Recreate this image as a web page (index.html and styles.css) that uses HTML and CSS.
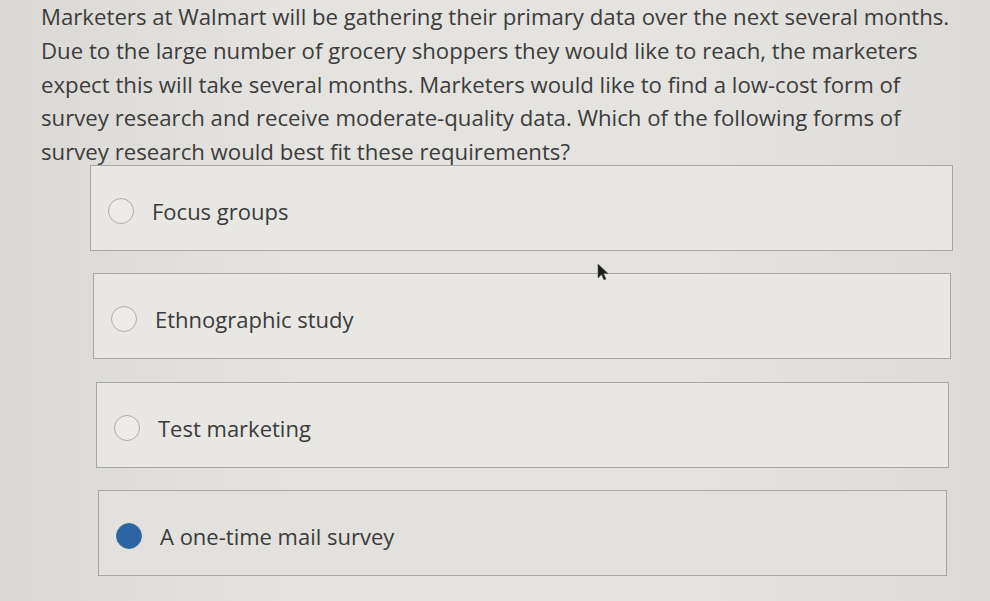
FILE: index.html
```html
<!DOCTYPE html>
<html>
<head>
<meta charset="utf-8">
<link rel="stylesheet" href="styles.css">
</head>
<body>
<div class="page">
  <p class="question">Marketers at Walmart will be gathering their primary data over the next several months.<br>Due to the large number of grocery shoppers they would like to reach, the marketers<br>expect this will take several months. Marketers would like to find a low-cost form of<br>survey research and receive moderate-quality data. Which of the following forms of<br>survey research would best fit these requirements?</p>
  <div class="options">
    <label class="option o1"><span class="radio"></span><span class="label">Focus groups</span></label>
    <label class="option o2"><span class="radio"></span><span class="label">Ethnographic study</span></label>
    <label class="option o3"><span class="radio"></span><span class="label">Test marketing</span></label>
    <label class="option o4"><span class="radio checked"></span><span class="label">A one-time mail survey</span></label>
  </div>
  <svg class="cursor" width="12" height="18" viewBox="0 0 12 18"><path d="M1 1 L1 15 L4.5 11.5 L7 17 L9 16 L6.5 10.5 L11 10.5 Z" fill="#1e1e1e" stroke="#555" stroke-width="0.6"/></svg>
</div>
</body>
</html>
```
FILE: styles.css
```css
html, body {
  margin: 0;
  padding: 0;
}
body {
  width: 990px;
  height: 601px;
  overflow: hidden;
  background: linear-gradient(90deg, #dbd9d5 0%, #e4e3df 30%, #e4e3df 70%, #dcdbd7 100%);
  font-family: "Open Sans", "Liberation Sans", sans-serif;
  color: #3e3e3e;
}
.page {
  position: relative;
  padding: 0 0 0 41px;
}
.question {
  margin: 0;
  white-space: nowrap;
  font-size: 22.2px;
  font-weight: 500;
  line-height: 33.8px;
  color: #3c3c3c;
}
.options {
  display: flex;
  flex-direction: column;
  gap: 22.5px;
  margin-top: -4px;
  margin-left: 49px;
  width: 863px;
}
.option {
  display: flex;
  align-items: center;
  height: 86px;
  box-sizing: border-box;
  border: 1.5px solid #a7a7a5;
  background: #e8e7e3;
  padding-left: 17px;
  padding-top: 6px;
}
.o2 { margin-left: 3px; margin-right: 2px; }
.o3 { margin-left: 6px; margin-right: 4px; }
.o4 { margin-left: 8px; margin-right: 6px; background: #e2e1dd; }
.radio {
  width: 26px;
  height: 26px;
  border-radius: 50%;
  border: 1.5px solid #acacaa;
  background: #ecebe8;
  box-sizing: border-box;
  flex: none;
}
.radio.checked {
  background: #2c64a3;
  border-color: #3a6fa8;
}
.label {
  margin-left: 18px;
  font-size: 22px;
  font-weight: 500;
  color: #3b3b3b;
}
.cursor {
  position: absolute;
  left: 597px;
  top: 263px;
}
```
